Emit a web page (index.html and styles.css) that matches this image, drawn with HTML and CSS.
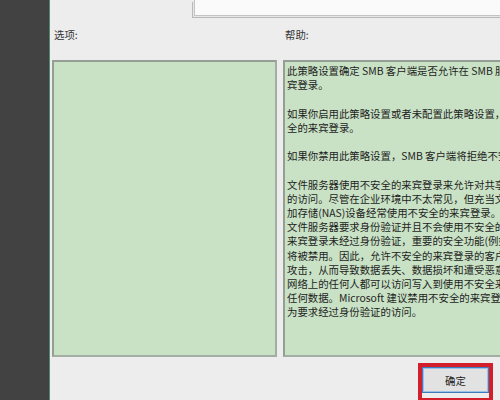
FILE: index.html
```html
<!DOCTYPE html>
<html lang="zh-CN">
<head>
<meta charset="utf-8">
<title>策略设置</title>
<link rel="stylesheet" href="styles.css">
</head>
<body>
<div class="screen">
  <div class="sidebar"></div>
  <div class="dialog">
    <div class="topbar"><div class="field"></div></div>
    <div class="panes">
      <div class="label">选项:</div>
      <div class="label label-help">帮助:</div>
      <div class="box box-options"></div>
      <div class="box box-help">
        <div class="line">此策略设置确定 SMB 客户端是否允许在 SMB 服务器上使用不安全的来</div>
        <div class="line">宾登录。</div>
        <div class="line blank">&nbsp;</div>
        <div class="line">如果你启用此策略设置或者未配置此策略设置，SMB 客户端将允许不安</div>
        <div class="line">全的来宾登录。</div>
        <div class="line blank">&nbsp;</div>
        <div class="line">如果你禁用此策略设置，SMB 客户端将拒绝不安全的来宾登录。</div>
        <div class="line blank">&nbsp;</div>
        <div class="line">文件服务器使用不安全的来宾登录来允许对共享文件夹进行未经身份验证</div>
        <div class="line">的访问。尽管在企业环境中不太常见，但充当文件服务器的消费者网络附</div>
        <div class="line">加存储(NAS)设备经常使用不安全的来宾登录。默认情况下，Windows</div>
        <div class="line">文件服务器要求身份验证并且不会使用不安全的来宾登录。由于不安全的</div>
        <div class="line">来宾登录未经过身份验证，重要的安全功能(例如 SMB 签名和 SMB 加密)</div>
        <div class="line">将被禁用。因此，允许不安全的来宾登录的客户端易受到各种中间人攻击</div>
        <div class="line">攻击，从而导致数据丢失、数据损坏和遭受恶意软件攻击。此外，你的</div>
        <div class="line">网络上的任何人都可以访问写入到使用不安全来宾登录的文件服务器中的</div>
        <div class="line">任何数据。Microsoft 建议禁用不安全的来宾登录，并将文件服务器配置</div>
        <div class="line">为要求经过身份验证的访问。</div>
      </div>
    </div>
    <div class="footer">
      <div class="highlight"><button class="ok">确定</button></div>
    </div>
  </div>
</div>
</body>
</html>
```
FILE: styles.css
```css
html, body {
  margin: 0;
  padding: 0;
  width: 500px;
  height: 400px;
  overflow: hidden;
  background: #ededed;
}

.screen {
  display: flex;
  width: 500px;
  height: 400px;
  overflow: hidden;
  font-family: "Noto Sans CJK SC", "Noto Sans", sans-serif;
  font-size: 10.4px;
  color: #222;
}

.sidebar {
  flex: 0 0 49px;
  background: #424242;
  border-right: 1px solid #4f8a70;
}

.dialog {
  flex: 1 1 auto;
  min-width: 0;
  display: flex;
  flex-direction: column;
  background: #ededed;
  overflow: hidden;
}

.topbar {
  height: 18px;
  padding-left: 144px;
}

.field {
  height: 15px;
  width: 400px;
  background: #fafafa;
  border-left: 1px solid #c4c4c4;
  border-bottom: 1px solid #c4c4c4;
  box-shadow: -1px 1px 0 #e6e6e6, -2px 2px 0 #b9b9b9;
}

.panes {
  display: grid;
  grid-template-columns: 225px 300px;
  grid-template-rows: 44px 297px;
  column-gap: 6px;
  padding-left: 2px;
}

.label {
  color: #333;
  padding-left: 2px;
  padding-top: 12px;
  line-height: 14px;
}

.box {
  box-sizing: border-box;
  background: #c9e2c5;
  border: 2px solid #949e94;
  border-right-color: #a3ada3;
  border-bottom-color: #a3ada3;
}

.box-help {
  padding: 2px 0 0 2px;
  overflow: hidden;
}

.line {
  white-space: nowrap;
  line-height: 14.2px;
  color: #1e1e1e;
}

.footer {
  display: flex;
  justify-content: flex-end;
  padding-top: 6px;
  padding-right: 7px;
}

.highlight {
  border: 4px solid #d21f2b;
  padding: 0;
  height: 31px;
  box-sizing: content-box;
}

.ok {
  display: block;
  width: 67px;
  height: 26px;
  margin: 0;
  padding: 0;
  background: #e2e2e2;
  border: 1px solid #3d7bbd;
  box-shadow: inset 0 0 0 1px #9ec2e6;
  font-family: "Noto Sans CJK SC", "Noto Sans", sans-serif;
  font-size: 10.4px;
  color: #222;
}
```
